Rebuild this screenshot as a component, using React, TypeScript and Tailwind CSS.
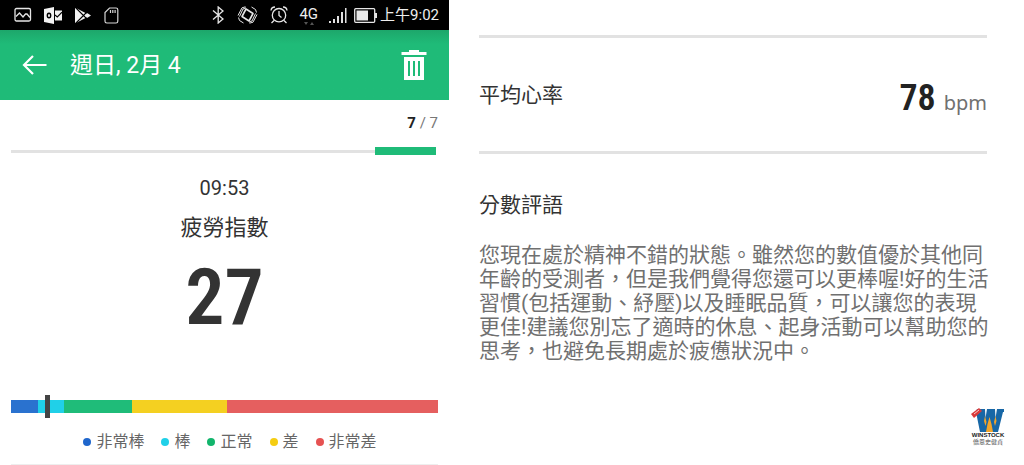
import React from "react";

const segments = [
  { label: "非常棒", bar: "grow-27 bg-[#2a72cf]", dot: "bg-[#1f66cc]" },
  { label: "棒", bar: "grow-26 bg-[#20d0e8]", dot: "bg-[#20d0e8]" },
  { label: "正常", bar: "grow-68 bg-[#1fbc79]", dot: "bg-[#12b56c]" },
  { label: "差", bar: "grow-95 bg-[#f4d021]", dot: "bg-[#f5cd12]" },
  { label: "非常差", bar: "grow-211 bg-[#e55f5f]", dot: "bg-[#e65252]" },
];

function PictureIcon() {
  return (
    <svg width="18" height="16" viewBox="0 0 18 16" fill="none" stroke="#e6e6e6" strokeWidth="1.3">
      <rect x="1" y="1.5" width="15.5" height="12.5" rx="1.5" />
      <path d="M2 9.500 5.500 6l3.500 4 2.500-3h1.500l3 3.500" />
    </svg>
  );
}

function OutlookIcon() {
  return (
    <svg width="18" height="17" viewBox="0 0 18 17">
      <path d="M0 2 10 0v17L0 15Z" fill="#f2f2f2" />
      <ellipse cx="5" cy="8.5" rx="1.700" ry="2.300" fill="none" stroke="#000" strokeWidth="1.4" />
      <path d="M11 3.5h7v10h-7Z" fill="#f2f2f2" />
      <path d="m11 8 2.3 2L18 5.2" fill="none" stroke="#000" strokeWidth="1.1" />
    </svg>
  );
}

function PlayStoreIcon() {
  return (
    <svg width="18" height="17" viewBox="0 0 18 17">
      <path d="M1 .5 12 6.300V10.700L1 16.5Z" fill="#f2f2f2" />
      <path d="m1 0 11.5 11.5M1 17 12.5 5.5" stroke="#000" strokeWidth="1.1" />
      <path d="m13 6 4 2.500L13 11l-2-2.500Z" fill="#f2f2f2" />
    </svg>
  );
}

function SdCardIcon() {
  return (
    <svg width="15" height="17" viewBox="0 0 15 17" fill="none" stroke="#d6d6d6" strokeWidth="1.2">
      <path d="M5.5 1H12a1.8 1.8 0 0 1 1.8 1.8v11.4A1.8 1.8 0 0 1 12 16H2.8A1.8 1.8 0 0 1 1 14.200V5.500Z" />
      <path d="M6.500 3v3M8.800 3v3M11.100 3v3" />
    </svg>
  );
}

function BluetoothIcon() {
  return (
    <svg width="13" height="18" viewBox="0 0 13 18" fill="none" stroke="#e6e6e6" strokeWidth="1.300">
      <path d="m1 4.500 10 8.500-4.800 4V1L11 5 1 13.500" />
    </svg>
  );
}

function VibrateIcon() {
  return (
    <svg width="21" height="18" viewBox="0 0 21 18" fill="none" stroke="#e6e6e6">
      <path d="M9 3 16 7.500 12 15 5 10.500Z" strokeWidth="1.600" strokeLinejoin="round" />
      <path d="M8.500.800 5 1.800 1 9.500M9 1.800 6 3 2.500 10.500M20 8.500 16 16.200l-3.500 1M18.500 7.500 15 15l-3 1.200M1.500 11.500l1 3L6.500 17M19.500 6.500l-1-3L14.500 1" strokeWidth="1" />
    </svg>
  );
}

function AlarmIcon() {
  return (
    <svg width="18" height="18" viewBox="0 0 18 18" fill="none" stroke="#e6e6e6" strokeWidth="1.300">
      <circle cx="9" cy="9.200" r="6.700" />
      <path d="M9 5v4.500l2.500 2M1 4.500C1.200 2.500 2.800 1 5 1M17 4.500C16.800 2.500 15.200 1 13 1M4 14.500 1.500 17M14 14.500l2.500 2.500" />
    </svg>
  );
}

function SignalIcon() {
  return (
    <svg width="18" height="17" viewBox="0 0 18 17" fill="#e0e0e0">
      <path d="M0 14h2v2H0ZM4 12h2v4H4ZM8 9h2v7H8ZM12 5h2v11h-2ZM16 1h1.500v15H16Z" />
    </svg>
  );
}

function BatteryIcon() {
  return (
    <svg width="23" height="15" viewBox="0 0 23 15">
      <rect x=".7" y=".7" width="20" height="13.600" rx="1" fill="none" stroke="#e6e6e6" strokeWidth="1.300" />
      <path d="M2.500 2.500H14v10H2.500Z" fill="#e9e9e9" />
      <path d="M21 5h2v5h-2Z" fill="#e6e6e6" />
    </svg>
  );
}

function BackIcon() {
  return (
    <svg width="25" height="20" viewBox="0 0 25 20" fill="none" stroke="#fff" strokeWidth="2.200">
      <path d="M24.500 10H2M11 1 2 10l9 9" />
    </svg>
  );
}

function TrashIcon() {
  return (
    <svg width="26" height="31" viewBox="0 0 26 31">
      <path d="M8 0h10v2h7.500v3H.500V2H8Z" fill="#fff" />
      <path d="M3 7h20v23H3Z" fill="#fff" />
      <path d="M8 11v15M13 11v15M18 11v15" stroke="#1fbb78" strokeWidth="2" />
    </svg>
  );
}

function StatusBar() {
  return (
    <div className="flex h-[30px] items-center justify-between bg-black pl-[14px] pr-[10px] text-[15px] text-[#eeeeee]">
      <div className="flex items-center gap-3">
        <PictureIcon />
        <OutlookIcon />
        <PlayStoreIcon />
        <SdCardIcon />
      </div>
      <div className="flex items-center gap-[11px]">
        <div className="flex items-center gap-3">
          <BluetoothIcon />
          <VibrateIcon />
          <AlarmIcon />
        </div>
        <div className="flex flex-col items-center">
          <span className="leading-4">4G</span>
          <svg width="10" height="3" viewBox="0 0 10 3" fill="#555">
            <path d="M0 0h4L2 3ZM6 3h4L8 0Z" />
          </svg>
        </div>
        <div className="flex items-center gap-[7px]">
          <SignalIcon />
          <div className="flex items-center gap-[3px]">
            <BatteryIcon />
            <span>上午9:02</span>
          </div>
        </div>
      </div>
    </div>
  );
}

function AppHeader() {
  return (
    <header className="flex h-[70px] items-center bg-linear-to-b from-[#1da76b] via-[#1fbb78] via-20% to-[#1fbb78] px-[22px] text-white">
      <button type="button" aria-label="返回">
        <BackIcon />
      </button>
      <h1 className="grow pl-[23px] pt-px text-[23px] leading-8">週日, 2月 4</h1>
      <button type="button" aria-label="刪除">
        <TrashIcon />
      </button>
    </header>
  );
}

function ScoreScreen() {
  return (
    <section>
      <StatusBar />
      <AppHeader />
      <div className="px-[11px] pt-[13px]">
        <p className="text-right text-[15px] leading-5 text-[#777777]">
          <b className="text-[#222222]">7</b> / 7
        </p>
        <div className="mr-[2px] mt-[14px] flex h-2 items-center">
          <div className="h-[3px] grow-6 basis-0 bg-[#e2e2e2]" />
          <div className="h-2 grow basis-0 bg-[#1fbb78]" />
        </div>
        <div className="text-center text-[#333333]">
          <p className="pt-[19px] text-[20px] leading-7">09:53</p>
          <h2 className="pt-[10px] text-[22px] leading-8">疲勞指數</h2>
          <p className="pt-3 font-['Roboto_Condensed','Roboto',sans-serif] text-[78px] font-semibold leading-[84px]">27</p>
        </div>
        <div className="relative mt-[60px] flex h-[13px]">
          {segments.map((s) => (
            <div key={s.label} className={`basis-0 ${s.bar}`} />
          ))}
          <div className="absolute -top-[5px] left-[8%] h-[23px] w-[5px] bg-[#444444]" />
        </div>
        <ul className="flex justify-center gap-[17px] pb-[10px] pl-[11px] pt-[17px] text-[16px] leading-6 text-[#666666]">
          {segments.map((s) => (
            <li key={s.label} className="flex items-center gap-[5px]">
              <span className={`size-2 rounded-full ${s.dot}`} />
              {s.label}
            </li>
          ))}
        </ul>
        <div className="h-px bg-[#eeeeee]" />
      </div>
    </section>
  );
}

function Logo() {
  return (
    <div className="flex flex-col items-center">
      <svg width="34" height="25" viewBox="0 0 34 25">
        <path d="M6 2h27v3h-1l-5 20H9L5 5Z" fill="#1767a6" />
        <path d="M14 2h2l-1.500 9ZM24 2h2l-1.500 9Z" fill="#fff" />
        <path d="m18.500 10 2 7 1.500 8h-7l1.500-8Z" fill="#f3a52b" />
        <path d="m14 9 1.500 6-1 4-1.500-5ZM24.500 9l-1.500 6 1 4 1.500-5Z" fill="#f3a52b" />
        <path d="m0 7 8-6 3 3-8 7Z" fill="#d93a3a" />
        <path d="m3 7 5-4" stroke="#f6c9c9" strokeWidth="1" />
      </svg>
      <span className="font-['Liberation_Sans',sans-serif] text-[6px] font-bold leading-[6px] text-[#222222]">WINSTOCK</span>
      <span className="text-[6px] leading-[7px] text-[#555555]">僑恩史健貞</span>
    </div>
  );
}

function DetailScreen() {
  return (
    <section className="flex flex-col pl-[30px] pr-[37px] pt-[35px]">
      <div className="flex items-center justify-between border-y-[3px] border-[#e2e2e2] py-8">
        <h2 className="text-[21px] leading-8 text-[#333333]">平均心率</h2>
        <p className="flex items-baseline gap-2 pt-2 text-[#222222]">
          <span className="font-['Roboto_Condensed','Roboto',sans-serif] text-[36px] font-semibold leading-[41px]">78</span>
          <span className="font-['Noto_Sans',sans-serif] text-[20px] leading-8 text-[#707070]">bpm</span>
        </p>
      </div>
      <h2 className="pt-[35px] text-[21px] leading-8 text-[#333333]">分數評語</h2>
      <p className="whitespace-nowrap pt-[22px] text-[21px] leading-6 text-[#707070]">
        您現在處於精神不錯的狀態。雖然您的數值優於其他同
        <br />
        年齡的受測者，但是我們覺得您還可以更棒喔!好的生活
        <br />
        習慣(包括運動、紓壓)以及睡眠品質，可以讓您的表現
        <br />
        更佳!建議您別忘了適時的休息、起身活動可以幫助您的
        <br />
        思考，也避免長期處於疲憊狀況中。
      </p>
      <div className="-mr-[18px] mt-[44px] flex justify-end">
        <Logo />
      </div>
    </section>
  );
}

export default function App() {
  return (
    <main
      lang="zh-Hant"
      className="grid min-h-screen grid-cols-[minmax(0,449fr)_minmax(0,575fr)] bg-white font-['Roboto','Noto_Sans_CJK_TC',sans-serif]"
    >
      <ScoreScreen />
      <DetailScreen />
    </main>
  );
}
